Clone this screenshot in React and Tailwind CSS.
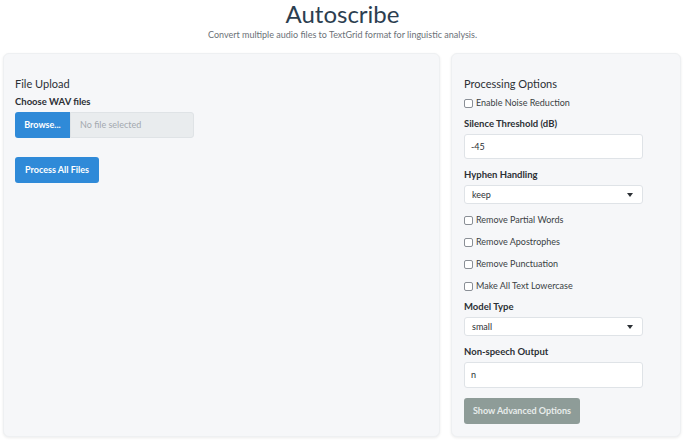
import React from "react";

function Check({ label }) {
  return (
    <div className="flex items-center h-[22px]">
      <span className="w-[9px] h-[9px] border border-[#8a8f96] rounded-[2px] bg-white mr-[3px]"></span>
      <span className="text-[9px] text-[#3a3f44]">{label}</span>
    </div>
  );
}

function Label({ children, className = "" }) {
  return (
    <div className={"h-[16px] flex items-center text-[9.5px] font-bold text-[#2c3035] " + className}>
      {children}
    </div>
  );
}

function Select({ value }) {
  return (
    <div className="w-[179px] h-[19px] mt-[2px] bg-white border border-[#dfe3e7] rounded-[3px] flex items-center justify-between pl-[7px] pr-[9px]">
      <span className="text-[9px] text-[#2c3035]">{value}</span>
      <span className="w-0 h-0 border-l-[3.5px] border-r-[3.5px] border-t-[4px] border-l-transparent border-r-transparent border-t-[#2c3035]"></span>
    </div>
  );
}

function Input({ value, h = "h-[25px]" }) {
  return (
    <div className={"w-[179px] mt-[2px] bg-white border border-[#dfe3e7] rounded-[3px] flex items-center pl-[6px] " + h}>
      <span className="text-[9px] text-[#2c3035]">{value}</span>
    </div>
  );
}

export default function App() {
  return (
    <div
      className="w-[685px] h-[441px] bg-white overflow-hidden"
      style={{ fontFamily: "Lato, 'Open Sans', sans-serif" }}
    >
      <div className="h-[53px] flex flex-col items-center">
        <div className="text-[24px] leading-[28px] text-[#2c3e50]">Autoscribe</div>
        <div className="text-[9px] leading-[14px] text-[#6b7177]">
          Convert multiple audio files to TextGrid format for linguistic analysis.
        </div>
      </div>
      <div className="flex pl-[3px] gap-[11px]">
        <div className="w-[437px] h-[384px] bg-[#f6f7f9] rounded-[6px] shadow-[0_1px_3px_rgba(0,0,0,0.08)] border border-[#eef0f2] px-[11px] pt-[20px]">
          <div className="h-[20px] flex items-center text-[11px] text-[#2c3035]">File Upload</div>
          <Label>Choose WAV files</Label>
          <div className="flex mt-[2px] h-[26px] w-[179px]">
            <div className="w-[55px] h-full bg-[#2f8ad8] rounded-l-[3px] flex items-center justify-center text-[9px] font-bold text-white">
              Browse...
            </div>
            <div className="flex-1 h-full bg-[#e9ecee] border border-[#dfe3e6] rounded-r-[3px] flex items-center pl-[9px] text-[9px] text-[#a3a9ae]">
              No file selected
            </div>
          </div>
          <div className="mt-[19px] w-[84px] h-[26px] bg-[#2f8ad8] rounded-[3px] flex items-center justify-center text-[9px] font-bold text-white">
            Process All Files
          </div>
        </div>
        <div className="w-[230px] h-[384px] bg-[#f6f7f9] rounded-[6px] shadow-[0_1px_3px_rgba(0,0,0,0.08)] border border-[#eef0f2] px-[12px] pt-[20px]">
          <div className="h-[20px] flex items-center text-[11px] text-[#2c3035]">Processing Options</div>
          <div className="h-[18px] flex items-center">
            <span className="w-[9px] h-[9px] border border-[#8a8f96] rounded-[2px] bg-white mr-[3px]"></span>
            <span className="text-[9px] text-[#3a3f44]">Enable Noise Reduction</span>
          </div>
          <Label className="mt-[4px]">Silence Threshold (dB)</Label>
          <Input value="-45" />
          <Label className="mt-[8px]">Hyphen Handling</Label>
          <Select value="keep" />
          <div className="mt-[5px]">
            <Check label="Remove Partial Words" />
            <Check label="Remove Apostrophes" />
            <Check label="Remove Punctuation" />
            <Check label="Make All Text Lowercase" />
          </div>
          <Label className="mt-[2px]">Model Type</Label>
          <Select value="small" />
          <Label className="mt-[8px]">Non-speech Output</Label>
          <Input value="n" h="h-[26px]" />
          <div className="mt-[10px] w-[116px] h-[26px] bg-[#8e9c98] rounded-[3px] flex items-center justify-center text-[9px] font-bold text-[#e8eceb]">
            Show Advanced Options
          </div>
        </div>
      </div>
    </div>
  );
}
